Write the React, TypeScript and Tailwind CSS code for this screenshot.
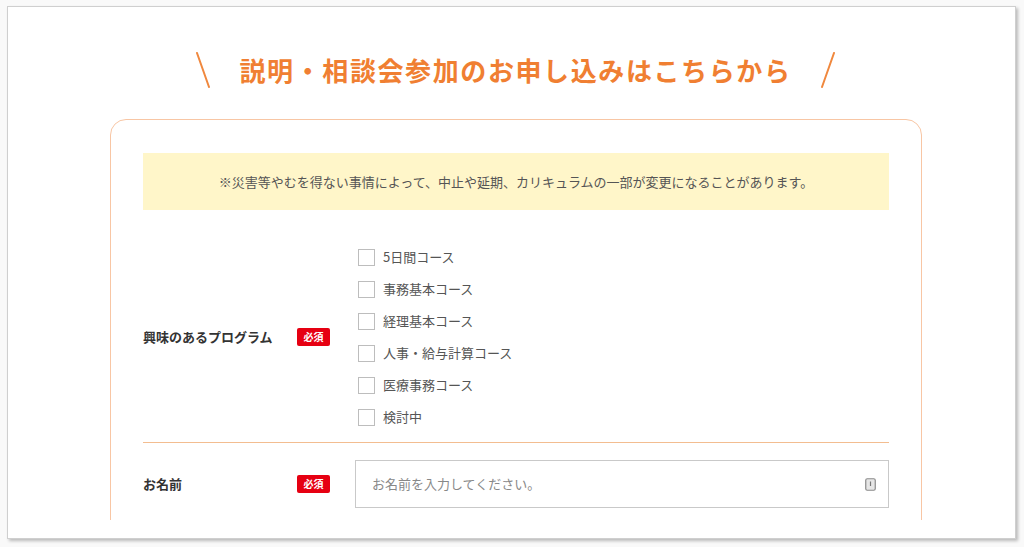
const courses = [
  '5日間コース',
  '事務基本コース',
  '経理基本コース',
  '人事・給与計算コース',
  '医療事務コース',
  '検討中',
];

function Required() {
  return (
    <span className="flex h-[18px] w-[33px] items-center justify-center rounded-[2px] bg-[#e60012] text-[10px] font-bold leading-none text-white">
      必須
    </span>
  );
}

function Slash({ flip }: { flip?: boolean }) {
  return (
    <svg width="16" height="36" viewBox="0 0 16 36" className="shrink-0">
      {flip ? (
        <line x1="14" y1="1" x2="2" y2="35" stroke="#f0883e" strokeWidth="2" strokeLinecap="round" />
      ) : (
        <line x1="2" y1="1" x2="14" y2="35" stroke="#f0883e" strokeWidth="2" strokeLinecap="round" />
      )}
    </svg>
  );
}

export default function App() {
  return (
    <div
      className="h-[547px] w-[1024px] overflow-hidden bg-[#f9f9f9] pl-[7px] pt-[6px]"
      style={{ fontFamily: '"Noto Sans CJK JP", "Noto Sans", sans-serif' }}
    >
      <div className="h-[533px] w-[1009px] border border-[#cfcfcf] bg-white shadow-[2px_2px_3px_rgba(0,0,0,0.25)]">
        <div className="h-[513px] overflow-hidden">
          <div className="flex items-center justify-center gap-[28px] pl-[8px] pt-[42px]">
            <Slash />
            <h1 className="text-[26px] font-bold leading-[42px] tracking-[1.6px] text-[#f07f32]">
              説明・相談会参加のお申し込みはこちらから
            </h1>
            <Slash flip />
          </div>

          <div className="ml-[102px] mt-[28px] h-[600px] w-[812px] rounded-[16px] border border-[#f8c6a4] px-[32px] pt-[33px]">
            <div className="flex h-[57px] items-center justify-center bg-[#fff6c9] text-[13px] text-[#555]">
              ※災害等やむを得ない事情によって、中止や延期、カリキュラムの一部が変更になることがあります。
            </div>

            <div className="flex items-center border-b border-[#f3bd90] pb-[9px] pt-[31px]">
              <div className="w-[154px] text-[13px] font-bold text-[#333]">興味のあるプログラム</div>
              <Required />
              <div className="ml-[28px] flex flex-col">
                {courses.map((c) => (
                  <label key={c} className="flex h-[32px] items-center gap-[8px]">
                    <span className="h-[17px] w-[17px] border border-[#bdbdbd] bg-white" />
                    <span className="text-[13px] text-[#555]">{c}</span>
                  </label>
                ))}
              </div>
            </div>

            <div className="flex items-center pt-[17px]">
              <div className="w-[154px] text-[13px] font-bold text-[#333]">お名前</div>
              <Required />
              <div className="ml-[25px] flex h-[48px] flex-1 items-center justify-between border border-[#c9c9c9] pl-[16px] pr-[12px]">
                <span className="text-[13px] text-[#888]">お名前を入力してください。</span>
                <svg width="11" height="13" viewBox="0 0 11 13">
                  <rect x="0.75" y="0.75" width="9.5" height="11.5" rx="1.5" fill="#e6e6e6" stroke="#8a8a8a" strokeWidth="1.2" />
                  <line x1="5.5" y1="3.5" x2="5.5" y2="8" stroke="#777" strokeWidth="1.2" />
                </svg>
              </div>
            </div>
          </div>
        </div>
      </div>
    </div>
  );
}
